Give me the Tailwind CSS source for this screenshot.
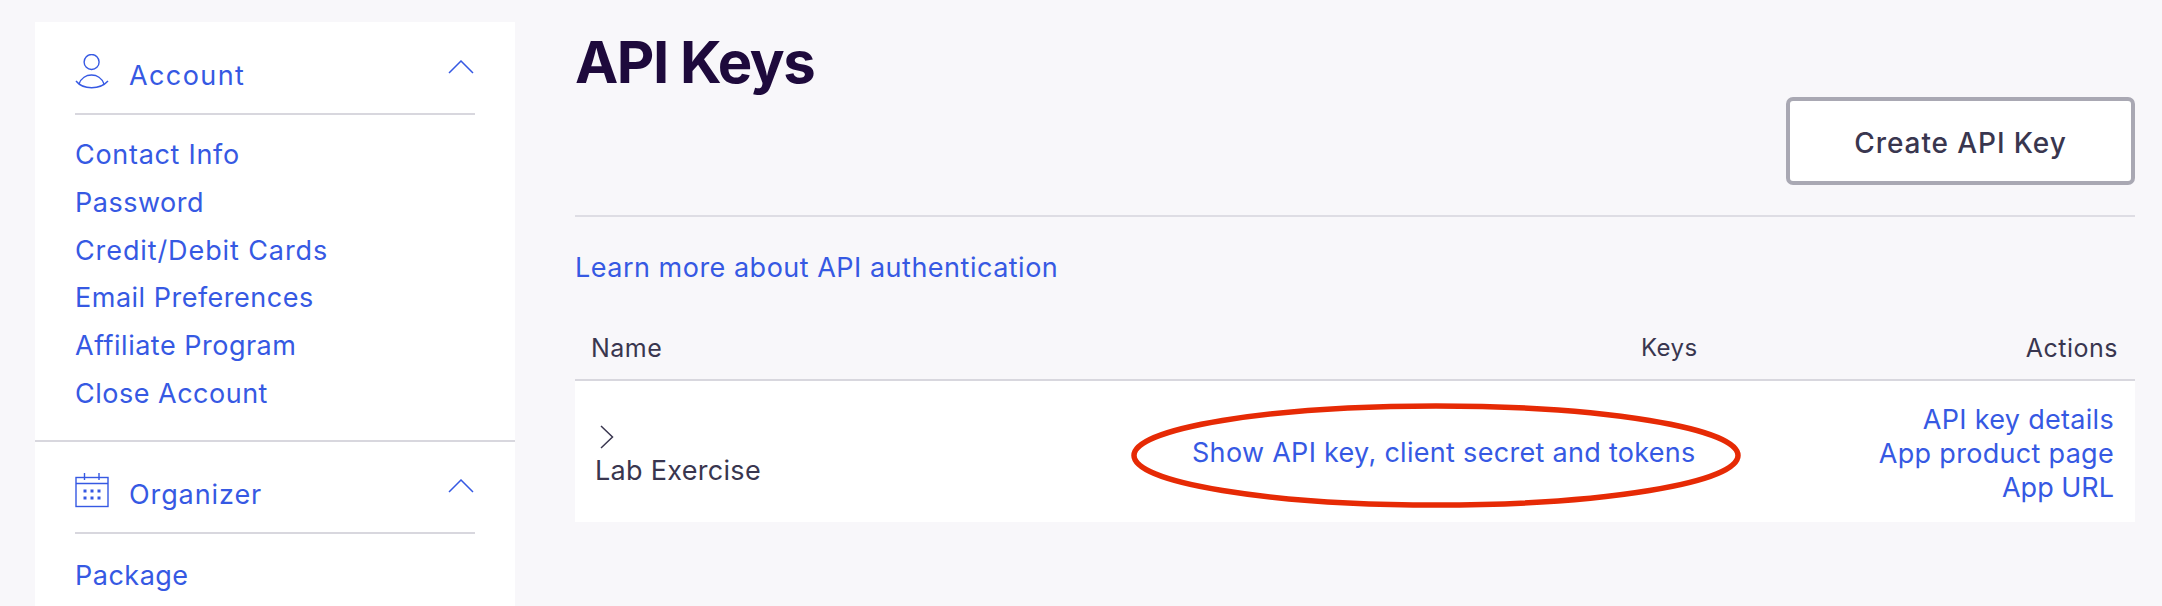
<!DOCTYPE html>
<html lang="en">
<head>
  <meta charset="UTF-8" />
  <title>API Keys</title>
  <script src="https://cdn.jsdelivr.net/npm/@tailwindcss/browser@4"></script>
</head>
<body class="bg-[#f8f7fa] text-[#39364f] h-[606px] overflow-hidden flex font-['Inter','Liberation_Sans',sans-serif]">

  <aside class="w-[480px] ml-[35px] mt-[22px] h-[584px] bg-white shrink-0 text-[#3659e3] text-[27px] tracking-[0.5px] overflow-hidden">
    <section class="h-[386px] border-b-2 border-[#d8d7de] px-[40px] pt-[32px] box-content">
      <div class="h-[59px] flex items-start border-b-2 border-[#d8d7de] box-content">
        <svg class="w-[34px] h-[35px]" viewBox="0 0 34 35" fill="none" stroke="#3659e3" stroke-width="1.4">
          <circle cx="16.6" cy="8" r="7.5" />
          <path d="M4 30 C8 18 25 18 29 30" />
          <path d="M1 27 C8 36 25 36 33 27" />
        </svg>
        <span class="ml-[20px] leading-[36px] mt-[4px] tracking-[1.4px]">Account</span>
        <svg class="w-[26px] h-[14px] ml-auto mr-[1px] mt-[6px]" viewBox="0 0 26 14" fill="none" stroke="#3659e3" stroke-width="1.5">
          <path d="M1 13 L13 1 L25 13" />
        </svg>
      </div>
      <nav class="mt-[16px] flex flex-col leading-[47.8px]">
        <a class="tracking-[0.7px]">Contact Info</a>
        <a>Password</a>
        <a class="tracking-[0.9px]">Credit/Debit Cards</a>
        <a>Email Preferences</a>
        <a>Affiliate Program</a>
        <a>Close Account</a>
      </nav>
    </section>
    <section class="px-[40px] pt-[31px]">
      <div class="h-[59px] flex items-start border-b-2 border-[#d8d7de] box-content">
        <svg class="w-[34px] h-[35px]" viewBox="0 0 34 35" fill="none" stroke="#3659e3" stroke-width="1.4">
          <rect x="1" y="4.5" width="32" height="29" />
          <path d="M1 10.5 H33 M9.5 0 V7 M24 0 V7" />
          <path d="M8.5 18 H11.5 M15.5 18 H18.5 M22.5 18 H25.5 M8.5 25 H11.5 M15.5 25 H18.5 M22.5 25 H25.5" stroke-width="3" />
        </svg>
        <span class="ml-[20px] leading-[36px] mt-[4px] tracking-[0.9px]">Organizer</span>
        <svg class="w-[26px] h-[14px] ml-auto mr-[1px] mt-[6px]" viewBox="0 0 26 14" fill="none" stroke="#3659e3" stroke-width="1.5">
          <path d="M1 13 L13 1 L25 13" />
        </svg>
      </div>
      <nav class="mt-[18px] flex flex-col leading-[47.8px]">
        <a>Package</a>
      </nav>
    </section>
  </aside>

  <main class="ml-[60px] w-[1560px] shrink-0 relative">
    <h1 class="text-[58px] leading-[72px] font-bold text-[#1e0a3c] mt-[26px] tracking-[-1.5px]">API Keys</h1>

    <div class="h-[117px] border-b-2 border-[#dedde4] flex justify-end items-start box-content">
      <button class="w-[349px] h-[88px] mt-[-1px] pt-[3px] bg-white border-4 border-[#a9a8b3] rounded-[7px] text-[28px] font-medium tracking-[0.9px]">Create API Key</button>
    </div>

    <a class="block mt-[33px] text-[#3659e3] text-[27px] leading-[36px] tracking-[0.5px]">Learn more about API authentication</a>

    <div class="mt-[25px] h-[48px] border-b-2 border-[#d8d7de] flex items-start text-[25px] leading-[36px] tracking-[0.5px] pt-[19px] pb-[1px] box-content">
      <span class="ml-[16px]">Name</span>
      <span class="ml-auto mr-[328px] text-[24px]">Keys</span>
      <span class="mr-[17px]">Actions</span>
    </div>

    <div class="h-[141px] bg-white flex text-[27px] tracking-[0.3px]">
      <div class="ml-[20px] mt-[44px] w-[400px]">
        <svg class="w-[14px] h-[24px] ml-[5px] block" viewBox="0 0 14 24" fill="none" stroke="#39364f" stroke-width="1.5">
          <path d="M1 1 L12.5 12 L1 23" />
        </svg>
        <div class="leading-[36px] mt-[4px]">Lab Exercise</div>
      </div>
      <a class="ml-[197px] mt-[54px] leading-[36px] text-[#3659e3]">Show API key, client secret and tokens</a>
      <div class="ml-auto mr-[21px] mt-[22px] text-right text-[#3659e3] leading-[34px]">
        <a class="block">API key details</a>
        <a class="block">App product page</a>
        <a class="block tracking-[0px]">App URL</a>
      </div>
    </div>

    <svg class="absolute left-[556px] top-[403px] w-[610px] h-[105px] pointer-events-none" viewBox="0 0 610 105" fill="none">
      <ellipse cx="305" cy="52.5" rx="302" ry="49.5" stroke="#e62a05" stroke-width="5.5" />
    </svg>
  </main>
</body>
</html>
